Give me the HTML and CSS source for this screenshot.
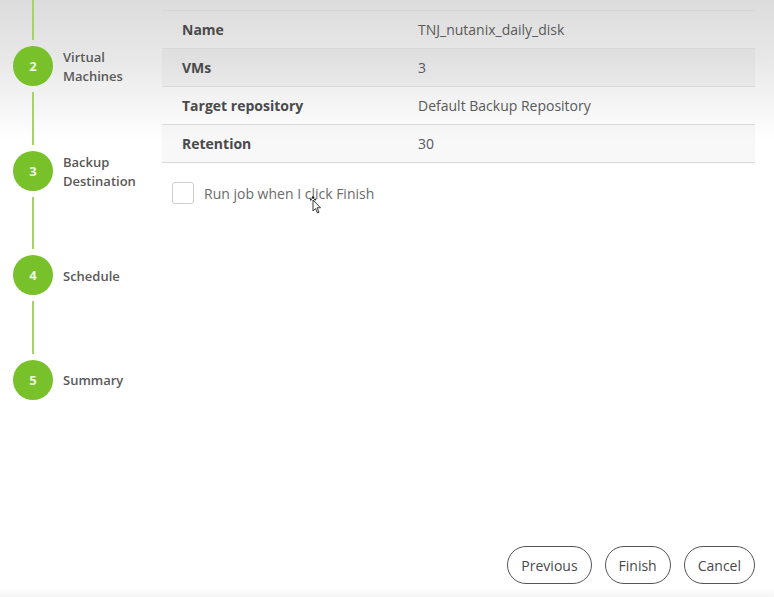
FILE: index.html
```html
<!DOCTYPE html>
<html>
<head>
<meta charset="utf-8">
<link rel="stylesheet" href="styles.css">
</head>
<body>
<div class="page">
  <nav class="steps">
    <div class="line line-top"></div>
    <div class="step"><span class="circle">2</span><span class="label">Virtual<br>Machines</span></div>
    <div class="line"></div>
    <div class="step"><span class="circle">3</span><span class="label">Backup<br>Destination</span></div>
    <div class="line"></div>
    <div class="step"><span class="circle">4</span><span class="label">Schedule</span></div>
    <div class="line"></div>
    <div class="step"><span class="circle">5</span><span class="label">Summary</span></div>
  </nav>
  <main class="main">
    <div class="summary">
      <div class="row"><span class="key">Name</span><span class="val">TNJ_nutanix_daily_disk</span></div>
      <div class="row alt"><span class="key">VMs</span><span class="val">3</span></div>
      <div class="row"><span class="key">Target repository</span><span class="val">Default Backup Repository</span></div>
      <div class="row alt"><span class="key">Retention</span><span class="val">30</span></div>
    </div>
    <label class="check">
      <span class="box"></span>
      <span class="check-text">Run job when I click Finish</span>
      <svg class="cursor" width="14" height="20" viewBox="0 0 14 20">
        <circle cx="3" cy="1.5" r="1.2" fill="#222"/>
        <circle cx="0.8" cy="3.5" r="1.1" fill="#222"/>
        <circle cx="5.2" cy="3.5" r="1.1" fill="#222"/>
        <path d="M3 4 L3 15 L5.5 12.5 L7.5 17 L9 16.3 L7 11.8 L10.5 11.8 Z" fill="#fff" stroke="#222" stroke-width="0.9"/>
      </svg>
    </label>
    <div class="actions">
      <button class="btn">Previous</button>
      <button class="btn">Finish</button>
      <button class="btn">Cancel</button>
    </div>
  </main>
</div>
</body>
</html>
```

FILE: styles.css
```css
html, body {
  margin: 0;
  padding: 0;
}
body {
  width: 774px;
  height: 597px;
  overflow: hidden;
  font-family: "Open Sans", "Liberation Sans", sans-serif;
  background:
    linear-gradient(to bottom, rgba(240,240,240,0) 0, #f6f6f6 100%) left bottom / 100% 10px no-repeat,
    linear-gradient(to bottom, #dcdcdc 0, #e8e8e8 60px, #ffffff 140px) top / 100% 160px no-repeat,
    #ffffff;
}
.page {
  display: flex;
  height: 597px;
}
.steps {
  width: 162px;
  flex: none;
  display: flex;
  flex-direction: column;
  padding-left: 13px;
  box-sizing: border-box;
}
.line {
  width: 2px;
  height: 52.67px;
  margin: 6px 0 6px 19px;
  background: #a5d26b;
}
.line-top {
  height: 40px;
  margin-top: 0;
}
.step {
  display: flex;
  align-items: center;
  height: 40px;
}
.circle {
  width: 40px;
  height: 40px;
  border-radius: 50%;
  background: #78c12a;
  color: #eef7e2;
  font-weight: 700;
  font-size: 13px;
  display: flex;
  align-items: center;
  justify-content: center;
  flex: none;
}
.label {
  margin-left: 10px;
  margin-top: 2px;
  font-size: 13px;
  font-weight: 600;
  line-height: 19px;
  color: #595959;
  white-space: nowrap;
}
.main {
  flex: 1;
  display: flex;
  flex-direction: column;
  padding: 10px 19px 13px 0;
}
.summary {
  border-top: 1px solid #d6d6d6;
}
.row {
  display: flex;
  align-items: center;
  height: 37px;
  border-bottom: 1px solid #d9d9d9;
  font-size: 14px;
}
.row.alt {
  background: rgba(0,0,0,0.028);
}
.key {
  width: 236px;
  padding-left: 20px;
  font-weight: 700;
  color: #4a4a4a;
}
.val {
  color: #595959;
}
.check {
  display: flex;
  align-items: center;
  margin-top: 19px;
  margin-left: 10px;
  position: relative;
}
.box {
  width: 20px;
  height: 20px;
  border: 1px solid #cfcfcf;
  border-radius: 3px;
  background: #fff;
}
.check-text {
  margin-left: 10px;
  font-size: 14px;
  color: #6a6a6a;
}
.cursor {
  position: absolute;
  left: 138px;
  top: 14px;
}
.actions {
  margin-top: auto;
  display: flex;
  justify-content: flex-end;
  gap: 13px;
}
.btn {
  height: 38px;
  padding: 0 13px;
  border: 1px solid #555;
  border-radius: 19px;
  background: #fff;
  font-family: "Open Sans", "Liberation Sans", sans-serif;
  font-size: 14px;
  color: #4a4a4a;
}
```
